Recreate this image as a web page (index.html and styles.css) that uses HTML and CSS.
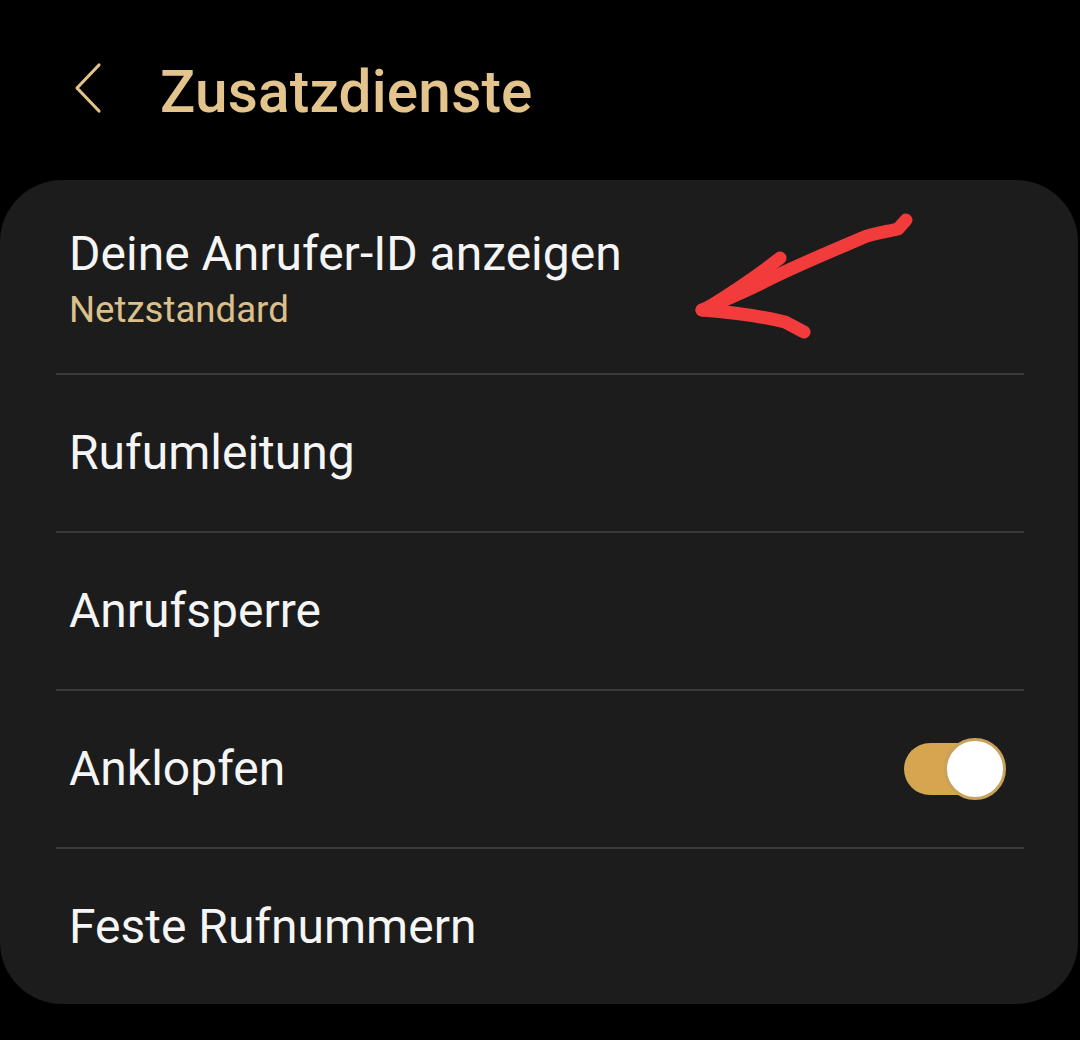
FILE: index.html
```html
<!DOCTYPE html>
<html>
<head>
<meta charset="utf-8">
<link rel="stylesheet" href="styles.css">
</head>
<body>
<div class="screen">
  <header class="topbar">
    <svg class="back" width="40" height="56" viewBox="0 0 40 56"><path d="M30 5 L8 28 L30 51" fill="none" stroke="#e2c38c" stroke-width="3.2" stroke-linecap="round" stroke-linejoin="round"/></svg>
    <h1 class="title">Zusatzdienste</h1>
  </header>
  <section class="card">
    <div class="row row-first">
      <div class="label">Deine Anrufer-ID anzeigen</div>
      <div class="sub">Netzstandard</div>
      <svg class="arrow" width="260" height="160" viewBox="0 0 260 160">
        <g fill="none" stroke="#f23b3b" stroke-width="13" stroke-linecap="round" stroke-linejoin="round">
          <path d="M226 24 L218 33 C205 36 190 38 182 42 C150 56 110 72 80 88 C60 98 40 106 22 114"/>
          <path d="M100 62 C80 78 50 98 24 114"/>
          <path d="M22 114 C50 116 80 120 105 126 L124 136"/>
        </g>
      </svg>
    </div>
    <div class="divider"></div>
    <div class="row"><div class="label">Rufumleitung</div></div>
    <div class="divider"></div>
    <div class="row"><div class="label">Anrufsperre</div></div>
    <div class="divider"></div>
    <div class="row row-toggle">
      <div class="label">Anklopfen</div>
      <div class="toggle"><div class="thumb"></div></div>
    </div>
    <div class="divider"></div>
    <div class="row row-last"><div class="label">Feste Rufnummern</div></div>
  </section>
</div>
</body>
</html>
```
FILE: styles.css
```css
html, body {
  margin: 0;
  padding: 0;
  background: #000;
}
body {
  width: 1080px;
  height: 1040px;
  overflow: hidden;
  font-family: Roboto, "Noto Sans", sans-serif;
}
.screen {
  display: flex;
  flex-direction: column;
}
.topbar {
  height: 180px;
  display: flex;
  align-items: center;
  padding-left: 69px;
  box-sizing: border-box;
  padding-bottom: 4px;
}
.back {
  display: block;
  margin-right: 51px;
}
.title {
  margin: 0;
  margin-top: 8px;
  font-size: 58.5px;
  font-weight: 500;
  color: #e3c48c;
  letter-spacing: 0.2px;
}
.card {
  width: 1078px;
  height: 824px;
  background: #1c1c1c;
  border-radius: 62px;
  display: flex;
  flex-direction: column;
  box-sizing: border-box;
}
.row {
  height: 156px;
  display: flex;
  flex-direction: column;
  justify-content: center;
  padding-left: 69px;
  padding-right: 74px;
  position: relative;
}
.row-first {
  height: 193px;
  padding-top: 8px;
  box-sizing: border-box;
}
.row-last {
  height: 155px;
}
.label {
  color: #f5f5f5;
  font-size: 48px;
  line-height: 58px;
}
.sub {
  color: #dcc08b;
  font-size: 36.6px;
  line-height: 54px;
}
.divider {
  height: 2px;
  margin: 0 54px 0 56px;
  background: #3a3a3a;
}
.row-toggle {
  flex-direction: row;
  align-items: center;
  justify-content: space-between;
}
.toggle {
  width: 100px;
  height: 52px;
  border-radius: 26px;
  background: #d6a550;
  position: relative;
}
.thumb {
  position: absolute;
  right: -2px;
  top: -5px;
  width: 56px;
  height: 56px;
  border-radius: 50%;
  background: #fff;
  border: 3px solid #c9a15a;
}
.arrow {
  position: absolute;
  left: 680px;
  top: 16px;
}
```
